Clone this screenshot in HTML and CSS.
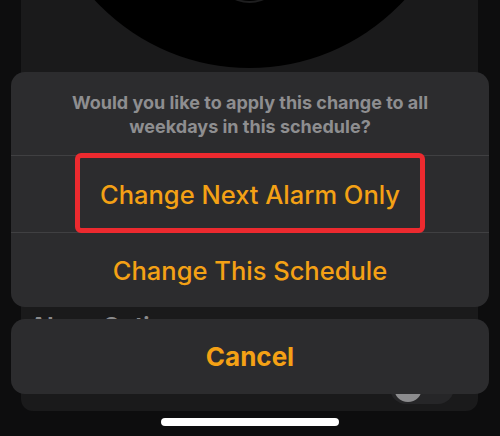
FILE: index.html
```html
<!DOCTYPE html>
<html>
<head>
<meta charset="utf-8">
<link rel="stylesheet" href="styles.css">
</head>
<body>
<div class="screen">
  <div class="card">
    <div class="dial"><div class="dial-ring"></div></div>
    <div class="card-spacer"></div>
    <div class="card-heading">Alarm Options</div>
    <div class="card-row">
      <div class="toggle"><div class="knob"></div></div>
    </div>
  </div>

  <div class="overlay">
    <div class="sheet">
      <div class="sheet-title">Would you like to apply this change to all weekdays in this schedule?</div>
      <div class="sheet-btn first">Change Next Alarm Only</div>
      <div class="sheet-btn">Change This Schedule</div>
    </div>
    <div class="cancel">Cancel</div>
  </div>

  <div class="highlight"></div>
  <div class="home-indicator"></div>
</div>
</body>
</html>
```
FILE: styles.css
```css
html, body {
  margin: 0;
  padding: 0;
  background: #0d0d0e;
}
.screen {
  position: relative;
  width: 500px;
  height: 436px;
  overflow: hidden;
  font-family: Inter, "Noto Sans", "Liberation Sans", sans-serif;
}
.card {
  position: relative;
  margin: 0 22px 0 21px;
  height: 411px;
  background: #1a1a1b;
  border-radius: 0 0 12px 12px;
  display: flex;
  flex-direction: column;
  overflow: hidden;
}
.dial {
  position: absolute;
  left: 18px;
  top: -353px;
  width: 421px;
  height: 421px;
  border-radius: 50%;
  background: #000;
}
.dial-ring {
  position: absolute;
  left: 150px;
  top: 150px;
  width: 121px;
  height: 204px;
  border-radius: 50%;
  border-bottom: 2px solid #1e1e1f;
}
.card-spacer {
  height: 312px;
}
.card-heading {
  margin-left: 9px;
  font-size: 23px;
  font-weight: 700;
  color: #8a8a8c;
  line-height: 28px;
}
.card-row {
  display: flex;
  justify-content: flex-end;
  padding-right: 24px;
  margin-top: 32px;
}
.toggle {
  position: relative;
  width: 64px;
  height: 32px;
  border-radius: 16px;
  background: #262628;
}
.knob {
  position: absolute;
  left: 4px;
  top: 2px;
  width: 28px;
  height: 28px;
  border-radius: 50%;
  background: #8c8c8e;
}
.overlay {
  position: absolute;
  inset: 0;
  padding: 72px 11px 0;
  display: flex;
  flex-direction: column;
  gap: 12px;
}
.sheet {
  background: #2c2c2e;
  border-radius: 14px;
  display: flex;
  flex-direction: column;
}
.sheet-title {
  height: 83px;
  box-sizing: border-box;
  padding: 19px 40px 0;
  text-align: center;
  font-size: 18px;
  font-weight: 700;
  line-height: 24px;
  color: #8e8e90;
}
.sheet-btn {
  height: 76px;
  border-top: 1px solid #404042;
  display: flex;
  align-items: center;
  justify-content: center;
  font-size: 25.5px;
  font-weight: 500;
  color: #f4a115;
}
.sheet-btn + .sheet-btn {
  height: 74px;
}
.cancel {
  height: 75px;
  background: #2c2c2e;
  border-radius: 14px;
  display: flex;
  align-items: center;
  justify-content: center;
  font-size: 26px;
  font-weight: 700;
  color: #f4a115;
}
.highlight {
  position: absolute;
  left: 75px;
  top: 153px;
  width: 340px;
  height: 70px;
  border: 5px solid #ec2a2f;
  border-radius: 6px;
}
.home-indicator {
  position: absolute;
  left: 161px;
  top: 418px;
  width: 178px;
  height: 8px;
  border-radius: 4px;
  background: #fff;
}
```
